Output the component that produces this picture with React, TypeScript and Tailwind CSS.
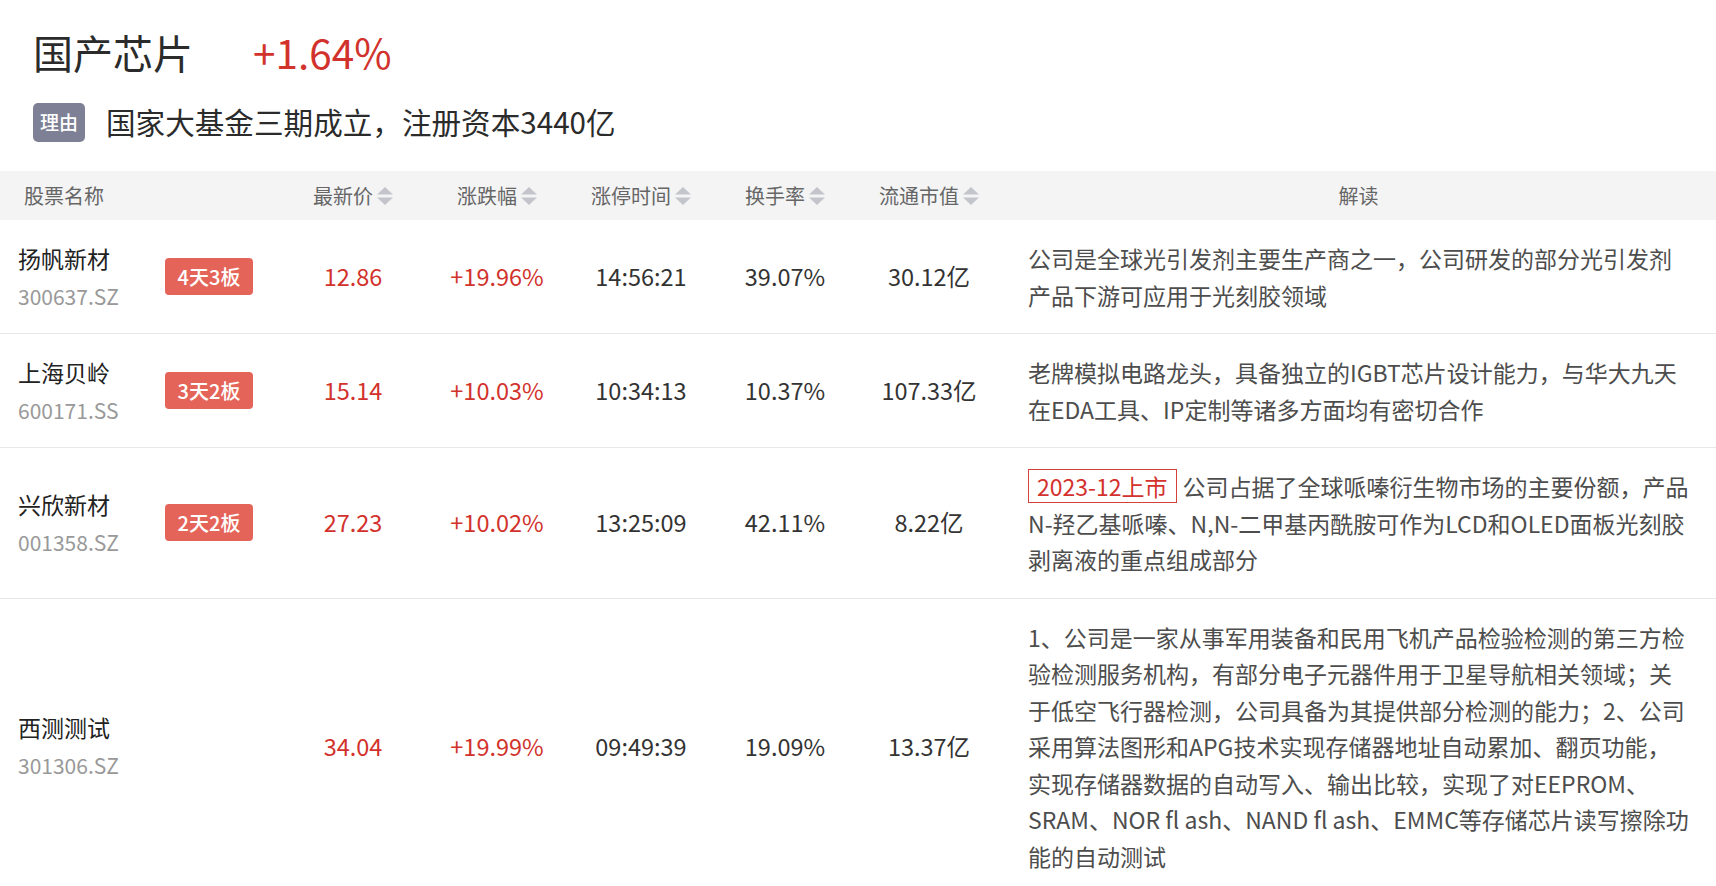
import React from "react";

type Stock = {
  name: string;
  code: string;
  tag?: string;
  price: string;
  pct: string;
  time: string;
  turnover: string;
  cap: string;
  listed?: string;
  lines: string[];
};

const stocks: Stock[] = [
  {
    name: "扬帆新材",
    code: "300637.SZ",
    tag: "4天3板",
    price: "12.86",
    pct: "+19.96%",
    time: "14:56:21",
    turnover: "39.07%",
    cap: "30.12亿",
    lines: ["公司是全球光引发剂主要生产商之一，公司研发的部分光引发剂", "产品下游可应用于光刻胶领域"],
  },
  {
    name: "上海贝岭",
    code: "600171.SS",
    tag: "3天2板",
    price: "15.14",
    pct: "+10.03%",
    time: "10:34:13",
    turnover: "10.37%",
    cap: "107.33亿",
    lines: ["老牌模拟电路龙头，具备独立的IGBT芯片设计能力，与华大九天", "在EDA工具、IP定制等诸多方面均有密切合作"],
  },
  {
    name: "兴欣新材",
    code: "001358.SZ",
    tag: "2天2板",
    price: "27.23",
    pct: "+10.02%",
    time: "13:25:09",
    turnover: "42.11%",
    cap: "8.22亿",
    listed: "2023-12上市",
    lines: [
      "公司占据了全球哌嗪衍生物市场的主要份额，产品",
      "N-羟乙基哌嗪、N,N-二甲基丙酰胺可作为LCD和OLED面板光刻胶",
      "剥离液的重点组成部分",
    ],
  },
  {
    name: "西测测试",
    code: "301306.SZ",
    price: "34.04",
    pct: "+19.99%",
    time: "09:49:39",
    turnover: "19.09%",
    cap: "13.37亿",
    lines: [
      "1、公司是一家从事军用装备和民用飞机产品检验检测的第三方检",
      "验检测服务机构，有部分电子元器件用于卫星导航相关领域；关",
      "于低空飞行器检测，公司具备为其提供部分检测的能力；2、公司",
      "采用算法图形和APG技术实现存储器地址自动累加、翻页功能，",
      "实现存储器数据的自动写入、输出比较，实现了对EEPROM、",
      "SRAM、NOR fl ash、NAND fl ash、EMMC等存储芯片读写擦除功",
      "能的自动测试",
    ],
  },
];

// up/down sort arrows next to header labels
function SortIcon() {
  return (
    <svg width="16" height="20" viewBox="0 0 16 20" className="ml-[4px] shrink-0">
      <path d="M8 1 L16 8.5 H0 Z" fill="#c3c5cb" />
      <path d="M0 11.5 H16 L8 19 Z" fill="#c3c5cb" />
    </svg>
  );
}

function SortHeader({ label }: { label: string }) {
  return (
    <div className="flex items-center justify-center">
      <span>{label}</span>
      <SortIcon />
    </div>
  );
}

const grid = "grid grid-cols-[150px_131px_144px_144px_144px_144px_144px_1fr]";

export default function App() {
  return (
    <div
      className="min-h-screen w-full bg-white text-[#333]"
      style={{ fontFamily: '"Noto Sans CJK SC", "Noto Sans", sans-serif' }}
    >
      {/* Title */}
      <div className="px-[33px] pt-[28px]">
        <div className="flex items-baseline leading-[48px]">
          <h1 className="text-[40px] font-normal text-[#2b2b2b]">国产芯片</h1>
          <span className="ml-[60px] text-[40.5px] text-[#d2322c]">+1.64%</span>
        </div>
        <div className="mt-[26px] flex items-center">
          <span className="flex h-[39px] w-[52px] items-center justify-center rounded-[5px] bg-[#7e8195] text-[19px] font-medium text-white">
            理由
          </span>
          <span className="ml-[21px] text-[29.6px] leading-[40px] text-[#2b2b2b]">
            国家大基金三期成立，注册资本3440亿
          </span>
        </div>
      </div>

      {/* Table */}
      <div className="mt-[29px]">
        <div className={`${grid} h-[49px] items-center bg-[#f4f4f5] text-[20px] text-[#666]`}>
          <div className="col-span-2 pl-[24px]">股票名称</div>
          <SortHeader label="最新价" />
          <SortHeader label="涨跌幅" />
          <SortHeader label="涨停时间" />
          <SortHeader label="换手率" />
          <SortHeader label="流通市值" />
          <div className="text-center">解读</div>
        </div>

        {stocks.map((s) => (
          <div key={s.code} className={`${grid} items-center border-b border-[#e8e8e8]`}>
            <div className="pl-[18px]">
              <div className="text-[23px] leading-[30px] text-[#222]">{s.name}</div>
              <div className="mt-[8px] text-[21px] leading-[30px] text-[#999]">{s.code}</div>
            </div>
            <div className="pl-[15px]">
              {s.tag && (
                <span className="inline-flex h-[37px] w-[88px] items-center justify-center rounded-[4px] bg-[#e5645a] text-[20px] font-medium text-white">
                  {s.tag}
                </span>
              )}
            </div>
            <div className="text-center text-[23.5px] text-[#d2322c]">{s.price}</div>
            <div className="text-center text-[23.5px] text-[#d2322c]">{s.pct}</div>
            <div className="text-center text-[23.5px]">{s.time}</div>
            <div className="text-center text-[23.5px]">{s.turnover}</div>
            <div className="text-center text-[23.5px]">{s.cap}</div>
            <div className="py-[20px] pl-[27px]">
              <p className="whitespace-nowrap text-[23px] leading-[36.5px] text-[#4d4d4d]">
                {s.listed && (
                  <span className="mr-[6px] inline-block border border-[#d4413b] px-[8px] leading-[32px] text-[#d4322c]">
                    {s.listed}
                  </span>
                )}
                {s.lines.map((line, i) => (
                  <React.Fragment key={i}>
                    {i > 0 && <br />}
                    {line}
                  </React.Fragment>
                ))}
              </p>
            </div>
          </div>
        ))}
      </div>
    </div>
  );
}
